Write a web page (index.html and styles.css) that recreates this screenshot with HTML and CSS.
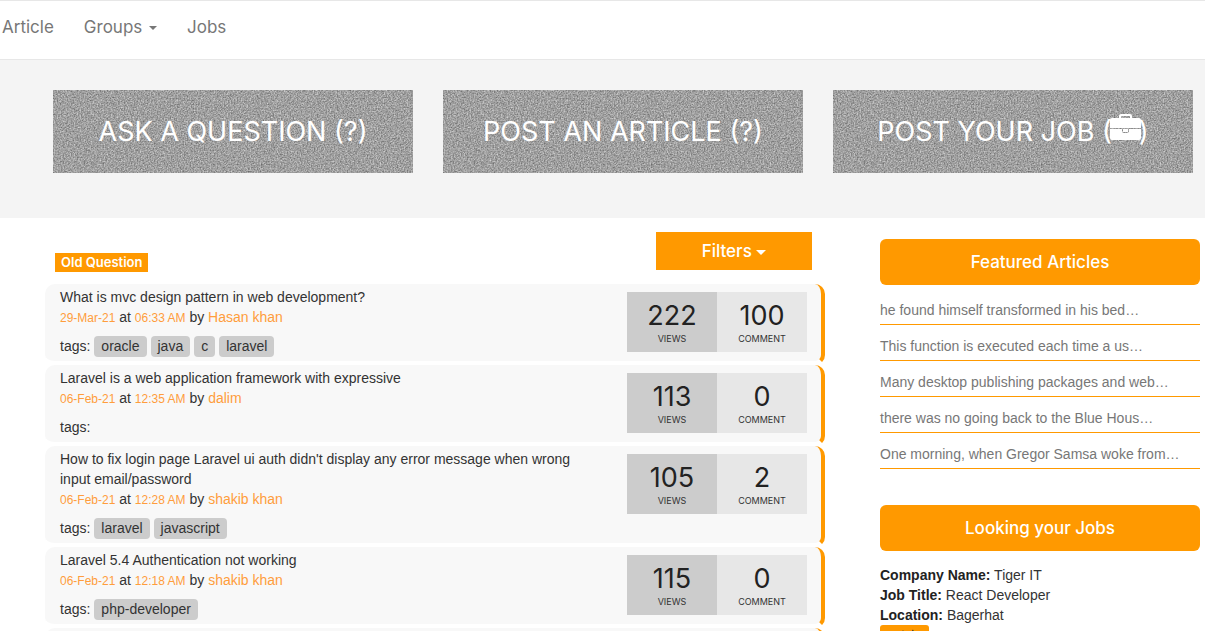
FILE: index.html
```html
<!DOCTYPE html>
<html lang="en">
<head>
<meta charset="utf-8">
<meta name="viewport" content="width=device-width, initial-scale=1">
<title>Questions</title>
<link rel="stylesheet" href="styles.css">
</head>
<body>
<nav class="nav">
  <a href="#">Article</a>
  <a href="#">Groups <span class="caret"></span></a>
  <a href="#">Jobs</a>
</nav>

<section class="hero">
  <a class="action" href="#">
    <svg class="grain" aria-hidden="true"><defs><filter id="grain" x="0" y="0" width="100%" height="100%" color-interpolation-filters="sRGB"><feTurbulence type="fractalNoise" baseFrequency="0.7" numOctaves="2" seed="4"/><feColorMatrix values="0.55 0 0 0 0.35  0.55 0 0 0 0.35  0.55 0 0 0 0.35  0 0 0 0 1"/></filter></defs><rect width="100%" height="100%" filter="url(#grain)"/></svg>
    <span class="action-text">ASK A QUESTION (?)</span>
  </a>
  <a class="action" href="#">
    <svg class="grain" aria-hidden="true"><rect width="100%" height="100%" filter="url(#grain)"/></svg>
    <span class="action-text">POST AN ARTICLE (?)</span>
  </a>
  <a class="action" href="#">
    <svg class="grain" aria-hidden="true"><rect width="100%" height="100%" filter="url(#grain)"/></svg>
    <span class="action-text">POST YOUR JOB (<svg class="briefcase" viewBox="0 0 31 27" aria-hidden="true"><path fill-rule="evenodd" d="M9 4V2Q9 0 11 0H20Q22 0 22 2V4H29Q31 4 31 6V14H0V6Q0 4 2 4ZM11 4H20V2H11Z"/><path d="M0 15H12V17Q12 19 14 19H17Q19 19 19 17V15H31V24Q31 26 29 26H2Q0 26 0 24Z"/><path d="M13 15H18V18H13Z"/></svg>)</span>
  </a>
</section>

<main class="layout">
  <section>
    <header class="list-head">
      <h1 class="badge">Old Question</h1>
      <button class="filters" type="button">Filters <span class="caret"></span></button>
    </header>
    <article class="question">
      <div class="body">
        <a class="title" href="#">What is mvc design pattern in web development?</a>
        <p class="meta"><small>29-Mar-21</small> at <small>06:33 AM</small> by <a href="#">Hasan khan</a></p>
        <p class="tags">tags: <a href="#">oracle</a><a href="#">java</a><a href="#">c</a><a href="#">laravel</a></p>
      </div>
      <div class="stats"><div class="stat views"><b>222</b><span>VIEWS</span></div><div class="stat"><b>100</b><span>COMMENT</span></div></div>
    </article>
    <article class="question">
      <div class="body">
        <a class="title" href="#">Laravel is a web application framework with expressive</a>
        <p class="meta"><small>06-Feb-21</small> at <small>12:35 AM</small> by <a href="#">dalim</a></p>
        <p class="tags">tags:</p>
      </div>
      <div class="stats"><div class="stat views"><b>113</b><span>VIEWS</span></div><div class="stat"><b>0</b><span>COMMENT</span></div></div>
    </article>
    <article class="question">
      <div class="body">
        <a class="title" href="#">How to fix login page Laravel ui auth didn't display any error message when wrong input email/password</a>
        <p class="meta"><small>06-Feb-21</small> at <small>12:28 AM</small> by <a href="#">shakib khan</a></p>
        <p class="tags">tags: <a href="#">laravel</a><a href="#">javascript</a></p>
      </div>
      <div class="stats"><div class="stat views"><b>105</b><span>VIEWS</span></div><div class="stat"><b>2</b><span>COMMENT</span></div></div>
    </article>
    <article class="question">
      <div class="body">
        <a class="title" href="#">Laravel 5.4 Authentication not working</a>
        <p class="meta"><small>06-Feb-21</small> at <small>12:18 AM</small> by <a href="#">shakib khan</a></p>
        <p class="tags">tags: <a href="#">php-developer</a></p>
      </div>
      <div class="stats"><div class="stat views"><b>115</b><span>VIEWS</span></div><div class="stat"><b>0</b><span>COMMENT</span></div></div>
    </article>
    <article class="question"></article>
  </section>

  <aside class="side">
    <h2 class="panel-title">Featured Articles</h2>
    <ul class="articles">
      <li><a href="#">he found himself transformed in his bed…</a></li>
      <li><a href="#">This function is executed each time a us…</a></li>
      <li><a href="#">Many desktop publishing packages and web…</a></li>
      <li><a href="#">there was no going back to the Blue Hous…</a></li>
      <li><a href="#">One morning, when Gregor Samsa woke from…</a></li>
    </ul>
    <h2 class="panel-title">Looking your Jobs</h2>
    <div class="job">
      <p><strong>Company Name:</strong> Tiger IT</p>
      <p><strong>Job Title:</strong> React Developer</p>
      <p><strong>Location:</strong> Bagerhat</p>
      <a class="details" href="#">Details</a>
    </div>
  </aside>
</main>
</body>
</html>
```

FILE: styles.css
```css
* { box-sizing: border-box; }

html { overflow: hidden; }

body {
  margin: 0;
  height: 100vh;
  overflow: hidden;
  background: #fff;
  color: #333;
  font: 14px/20px "Liberation Sans", Arial, sans-serif;
}

a { color: inherit; text-decoration: none; }

p, h1, h2, ul { margin: 0; padding: 0; }

.caret {
  display: inline-block;
  margin-left: 2px;
  border: 4px solid transparent;
  border-top-color: currentColor;
  border-bottom: 0;
  vertical-align: middle;
}

.nav {
  display: flex;
  gap: 30px;
  height: 60px;
  padding: 16px 2px;
  border-top: 1px solid #e7e7e7;
  border-bottom: 1px solid #e7e7e7;
  color: #777;
  font-family: Inter, sans-serif;
  font-size: 17px;
}

.hero {
  display: grid;
  grid-template-columns: repeat(3, 1fr);
  gap: 30px;
  padding: 30px 12px 45px 53px;
  background: #f4f4f4;
}

.action {
  display: grid;
  place-items: center;
  height: 83px;
  background: #a0a0a0;
  color: #fff;
  font-family: Inter, sans-serif;
  font-size: 27px;
  line-height: 40px;
}

.grain, .action-text { grid-area: 1 / 1; }

.grain { width: 100%; height: 83px; }

.action-text { z-index: 1; }

.briefcase {
  width: 31px;
  height: 27px;
  margin: 0 -2px;
  fill: #fff;
}

.layout {
  display: grid;
  grid-template-columns: 780fr 320fr;
  gap: 55px;
  padding: 14px 5px 0 45px;
}

.list-head {
  display: flex;
  justify-content: space-between;
  align-items: flex-start;
  height: 52px;
  padding: 0 13px 0 10px;
}

.badge {
  margin-top: 21px;
  padding: 0 6px;
  background: #f90;
  color: #fff;
  font-family: Inter, sans-serif;
  font-size: 13px;
  font-weight: 600;
  line-height: 19px;
}

.filters {
  width: 156px;
  height: 38px;
  border: 0;
  background: #f90;
  color: #fff;
  font: 500 17px/20px Inter, sans-serif;
}

.filters .caret { margin-left: 0; border-width: 5px 5px 0; }

.question {
  display: flex;
  justify-content: space-between;
  min-height: 81px;
  padding: 3px 14px 4px 15px;
  border-right: 4px solid #f90;
  border-bottom: 4px solid #fff;
  border-radius: 10px;
  background: #f8f8f8;
}

.body { flex: 1; max-width: 540px; }

.title { display: block; }

.meta a, .meta small { color: #ff9d3c; }

.meta small { font-size: 12px; line-height: 12px; }

.tags {
  display: flex;
  gap: 4px;
  margin-top: 9px;
  line-height: 21px;
}

.tags a {
  padding: 0 7px;
  border-radius: 4px;
  background: #ccc;
}

.stats { display: flex; margin-top: 5px; }

.stat {
  width: 90px;
  height: 60px;
  padding-top: 8px;
  background: #e7e7e7;
  font-family: Inter, sans-serif;
  text-align: center;
}

.views { background: #ccc; }

.stat b {
  display: block;
  color: #222;
  font-size: 27px;
  font-weight: 400;
  line-height: 32px;
}

.stat span { display: block; font-size: 9px; line-height: 14px; }

.side { padding-top: 7px; }

.panel-title {
  border-radius: 6px;
  background: #f90;
  color: #fff;
  font-family: Inter, sans-serif;
  font-size: 17px;
  font-weight: 500;
  line-height: 46px;
  text-align: center;
}

.articles {
  margin: 4px 0 36px;
  color: #777;
  list-style: none;
}

.articles li {
  padding: 11px 0 4px;
  border-bottom: 1px solid #f90;
}

.job { margin-top: 14px; }

.job strong { color: #222; font-weight: 600; }

.details {
  display: block;
  width: fit-content;
  padding: 0 7px;
  border-radius: 3px;
  background: #f90;
  font-family: Inter, sans-serif;
  font-size: 11px;
}
```
